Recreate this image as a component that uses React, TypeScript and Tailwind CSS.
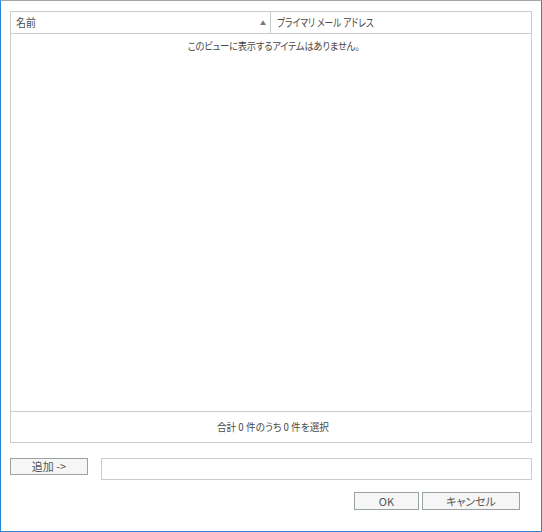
import React from "react";

export default function App() {
  return (
    <div
      className="w-[542px] h-[532px] bg-white border-l border-r border-b border-t border-l-[#2b88d8] border-r-[#2b88d8] border-b-[#2b88d8] border-t-[#a6a6a6] flex flex-col text-[#4a4a4a] [font-feature-settings:'palt']"
      style={{ fontFamily: '"Segoe UI", "Noto Sans CJK JP", "Noto Sans", sans-serif' }}
    >
      <div className="mx-[9px] mt-[10px] h-[432px] border border-[#c8cdcd] flex flex-col">
        <div className="h-[22px] flex border-b border-[#c8cdcd] shrink-0">
          <div className="w-[260px] flex items-center justify-between pl-[5px] pr-[4px] border-r border-[#c8cdcd] text-[11px]">
            <span className="inline-block origin-left scale-x-[0.9]">名前</span>
            <span className="text-[6px] text-[#777]">▲</span>
          </div>
          <div className="flex items-center pl-[6px] text-[11px] whitespace-nowrap">
            <span className="inline-block origin-left scale-x-[0.79]">プライマリ メール アドレス</span>
          </div>
        </div>
        <div className="flex-1 flex justify-center pt-[4px] pl-[6px] text-[10.5px] tracking-[-0.3px]">
          <span className="inline-block h-fit origin-center scale-x-[0.89] whitespace-nowrap">このビューに表示するアイテムはありません。</span>
        </div>
        <div className="h-[31px] border-t border-[#c8cdcd] flex items-center justify-center pl-[4px] text-[10.5px] shrink-0">
          <span className="inline-block origin-center scale-x-[0.92] whitespace-nowrap">合計 0 件のうち 0 件を選択</span>
        </div>
      </div>
      <div className="flex mx-[9px] mt-[15px] gap-[13px]">
        <button className="w-[78px] h-[17px] border border-[#9aa3a3] bg-[#f6f6f6] text-[11px] text-[#555] leading-none flex items-center justify-center">
          追加 -&gt;
        </button>
        <div className="flex-1 h-[22px] border border-[#c8cdcd]" />
      </div>
      <div className="flex justify-end mr-[21px] mt-[12px] gap-[3px]">
        <button className="w-[65px] h-[18px] border border-[#9aa3a3] bg-[#f6f6f6] text-[11px] text-[#555] leading-none flex items-center justify-center">
          OK
        </button>
        <button className="w-[98px] h-[18px] border border-[#9aa3a3] bg-[#f6f6f6] text-[11px] text-[#555] leading-none flex items-center justify-center">
          キャンセル
        </button>
      </div>
    </div>
  );
}
